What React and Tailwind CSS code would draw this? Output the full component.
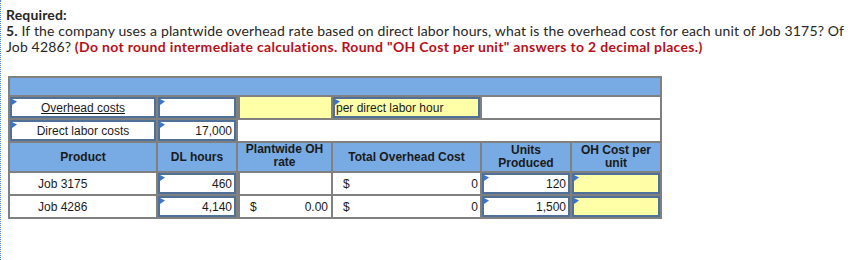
const Flag = () => (
  <svg className="absolute left-0 top-0" width="5" height="6" viewBox="0 0 5 6">
    <polygon points="0,0 5,2.5 0,6" fill="#3b74c9" />
  </svg>
);

const Input = ({ children, yellow, className = "" }) => (
  <div
    className={`relative flex h-full w-full items-center border-2 border-[#4f7199] ${
      yellow ? "bg-[#ffffa8]" : "bg-white"
    } ${className}`}
  >
    <Flag />
    {children}
  </div>
);

const widths = ["w-[148px]", "w-[80px]", "w-[95px]", "w-[149px]", "w-[90px]", "w-[88px]"];

const Cell = ({ i, last, children, className = "" }) => (
  <div
    className={`h-full shrink-0 ${widths[i]} ${last ? "" : "border-r-2 border-[#808080]"} ${className}`}
  >
    {children}
  </div>
);

export default function App() {
  return (
    <div className="h-[260px] w-[853px] overflow-hidden border-l border-dotted border-[#4a7fd0] bg-white">
      <div className="pl-[5px] pt-[7px] text-[14px] leading-[16px] tracking-[0.15px] text-[#262626] font-['Lato','Liberation_Sans',sans-serif]">
        <p className="font-bold">Required:</p>
        <p className="w-[846px]">
          <span className="font-bold">5.</span> If the company uses a plantwide overhead rate based on
          direct labor hours, what is the overhead cost for each unit of Job 3175? Of Job 4286?{" "}
          <span className="font-bold tracking-[0.32px] text-[#b80f1a]">
            (Do not round intermediate calculations. Round "OH Cost per unit" answers to 2 decimal
            places.)
          </span>
        </p>
      </div>

      <div className="ml-[7px] mt-[21px] w-[654px] border-2 border-[#808080] text-[12px] leading-[14px] text-[#1a1a1a] font-['Liberation_Sans',Arial,sans-serif]">
        <div className="h-[19px] border-b-2 border-[#808080] bg-[#78abe3]" />

        <div className="flex h-[23px] border-b-2 border-[#808080]">
          <Cell i={0} className="border-r-0">
            <Input className="justify-center">
              <span className="underline">Overhead costs</span>
            </Input>
          </Cell>
          <Cell i={1} className="border-r-0">
            <Input />
          </Cell>
          <Cell i={2} className="border-l-2 bg-[#ffffa8]" />
          <Cell i={3} className="border-r-0">
            <Input yellow className="pl-[1px]">
              per direct labor hour
            </Input>
          </Cell>
          <div className="h-full flex-1 bg-white" />
        </div>

        <div className="flex h-[23px] border-b-2 border-[#808080]">
          <Cell i={0} className="border-r-0">
            <Input className="justify-center">Direct labor costs</Input>
          </Cell>
          <Cell i={1} className="border-r-0">
            <Input className="justify-end pr-[2px]">17,000</Input>
          </Cell>
          <div className="h-full flex-1 bg-white" />
        </div>

        <div className="flex h-[30px] border-b-2 border-[#808080] bg-[#78abe3] text-center font-bold leading-[13px]">
          <Cell i={0} className="flex items-center justify-center">Product</Cell>
          <Cell i={1} className="flex items-center justify-center">DL hours</Cell>
          <Cell i={2} className="flex items-center justify-center pb-[2px]">
            Plantwide OH<br />rate
          </Cell>
          <Cell i={3} className="flex items-center justify-center">Total Overhead Cost</Cell>
          <Cell i={4} className="flex items-center justify-center">
            Units<br />Produced
          </Cell>
          <Cell i={5} last className="flex items-center justify-center">
            OH Cost per<br />unit
          </Cell>
        </div>

        {[
          { job: "Job 3175", hours: "460", rate: null, total: "0", units: "120" },
          { job: "Job 4286", hours: "4,140", rate: "0.00", total: "0", units: "1,500" },
        ].map((r, idx) => (
          <div
            key={r.job}
            className={`flex ${idx === 0 ? "h-[23px] border-b-2 border-[#808080]" : "h-[21px]"}`}
          >
            <Cell i={0} className="flex items-center pl-[28px]">{r.job}</Cell>
            <Cell i={1} className="border-r-0">
              <Input className="justify-end pr-[2px]">{r.hours}</Input>
            </Cell>
            <Cell i={2} className="flex items-center justify-between border-l-2 pl-[10px] pr-[3px]">
              {r.rate && (
                <>
                  <span>$</span>
                  <span>{r.rate}</span>
                </>
              )}
            </Cell>
            <Cell i={3} className="flex items-center justify-between pl-[10px] pr-[2px]">
              <span>$</span>
              <span>{r.total}</span>
            </Cell>
            <Cell i={4} className="border-r-0">
              <Input className="justify-end pr-[2px]">{r.units}</Input>
            </Cell>
            <Cell i={5} last>
              <Input yellow />
            </Cell>
          </div>
        ))}
      </div>
    </div>
  );
}
